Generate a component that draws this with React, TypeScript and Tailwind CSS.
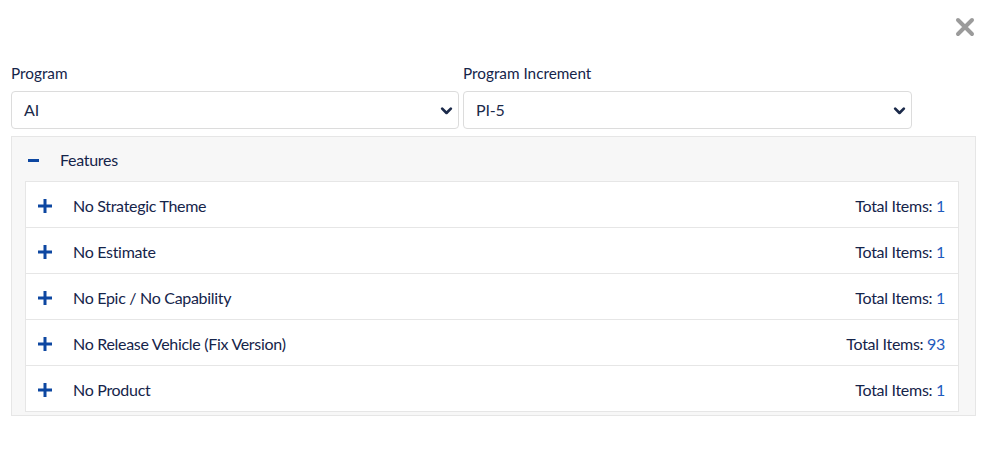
const rows = [
  { name: "No Strategic Theme", total: 1 },
  { name: "No Estimate", total: 1 },
  { name: "No Epic / No Capability", total: 1 },
  { name: "No Release Vehicle (Fix Version)", total: 93 },
  { name: "No Product", total: 1 },
];

const Chevron = () => (
  <svg width="13" height="13" viewBox="0 0 24 24" fill="none" stroke="#1b2a4a" strokeWidth="5" strokeLinecap="round" strokeLinejoin="round">
    <path d="M4 8.5l8 8 8-8" />
  </svg>
);

const Plus = () => (
  <svg width="14" height="14" viewBox="0 0 14 14">
    <rect x="5.5" y="0" width="3" height="14" fill="#0d47a1" />
    <rect x="0" y="5.5" width="14" height="3" fill="#0d47a1" />
  </svg>
);

const Select = ({ value, width }: { value: string; width: string }) => (
  <div className={`${width} h-[38px] border border-[#dcdcdc] rounded-[4px] bg-white flex items-center justify-between pl-[12px] pr-[5px]`}>
    <span className="text-[16px] tracking-[-0.2px] text-[#1b2a4a]">{value}</span>
    <Chevron />
  </div>
);

export default function App() {
  return (
    <div className="w-[999px] h-[469px] bg-white font-['Lato','Liberation_Sans',sans-serif] text-[#15244a] relative">
      {/* close */}
      <div className="absolute left-[955px] top-[17px]">
        <svg width="20" height="20" viewBox="0 0 20 20">
          <path d="M3 3L17 17M17 3L3 17" stroke="#9b9b9b" strokeWidth="4" strokeLinecap="round" />
        </svg>
      </div>

      <div className="pt-[62px] pl-[11px]">
        <div className="flex gap-[4px]">
          <div className="flex flex-col">
            <label className="text-[15.3px] leading-[22px] mb-[7px]">Program</label>
            <Select value="AI" width="w-[448px]" />
          </div>
          <div className="flex flex-col">
            <label className="text-[15.3px] leading-[22px] mb-[7px]">Program Increment</label>
            <Select value="PI-5" width="w-[449px]" />
          </div>
        </div>

        {/* Features panel */}
        <div className="mt-[7px] w-[965px] border border-[#e6e6e6] bg-[#f7f7f7] pl-[13px] pr-[16px] pb-[3px]">
          <div className="h-[44px] pt-[2px] flex items-center">
            <div className="w-[11px] h-[3px] bg-[#0d47a1] ml-[3px]" />
            <span className="ml-[21px] text-[16px] tracking-[-0.3px]">Features</span>
          </div>
          <div className="border border-[#e6e6e6] bg-white">
            {rows.map((r, i) => (
              <div
                key={r.name}
                className={`flex items-center justify-between pl-[12px] pr-[13px] pt-[2px] ${i > 0 ? "h-[46px] border-t border-[#e6e6e6]" : "h-[45px]"}`}
              >
                <div className="flex items-center">
                  <Plus />
                  <span className="ml-[21px] text-[16px] tracking-[-0.3px]">{r.name}</span>
                </div>
                <span className="text-[16px] tracking-[-0.3px]">
                  Total Items: <span className="text-[#1f5bbd]">{r.total}</span>
                </span>
              </div>
            ))}
          </div>
        </div>
      </div>
    </div>
  );
}
